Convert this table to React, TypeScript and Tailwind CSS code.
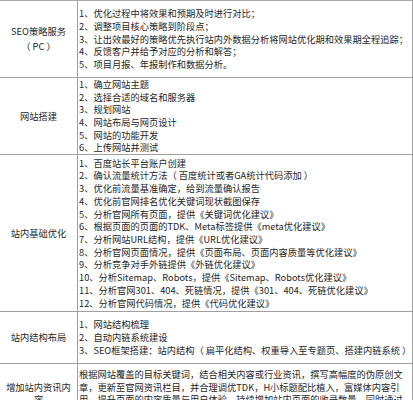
import React from "react";

const rows: { label: string; h: string; items: string[] }[] = [
  {
    label: "SEO策略服务（PC）",
    h: "h-[76px]",
    items: [
      "1、优化过程中将效果和预期及时进行对比；",
      "2、调整项目核心策略到阶段点；",
      "3、让出效最好的策略优先执行站内外数据分析将网站优化期和效果期全程追踪；",
      "4、反馈客户并给予对应的分析和解答；",
      "5、项目月报、年报制作和数据分析。",
    ],
  },
  {
    label: "网站搭建",
    h: "h-[76px]",
    items: [
      "1、确立网站主题",
      "2、选择合适的域名和服务器",
      "3、规划网站",
      "4、网站布局与网页设计",
      "5、网站的功能开发",
      "6、上传网站并测试",
    ],
  },
  {
    label: "站内基础优化",
    h: "h-[156px]",
    items: [
      "1、百度站长平台账户创建",
      "2、确认流量统计方法（ 百度统计或者GA统计代码添加 ）",
      "3、优化前流量基准确定，给到流量确认报告",
      "4、优化前官网排名优化关键词现状截图保存",
      "5、分析官网所有页面，提供《关键词优化建议》",
      "6、根据页面的页面的TDK、Meta标签提供《meta优化建议》",
      "7、分析网站URL结构，提供《URL优化建议》",
      "8、分析官网页面情况，提供《页面布局、页面内容质量等优化建议》",
      "9、分析竞争对手外链提供《外链优化建议》",
      "10、分析Sitemap、Robots，提供《Sitemap、Robots优化建议》",
      "11、分析官网301、404、死链情况，提供《301、404、死链优化建议》",
      "12、分析官网代码情况，提供《代码优化建议》",
    ],
  },
  {
    label: "站内结构布局",
    h: "h-[51px]",
    items: [
      "1、网站结构梳理",
      "2、自动内链系统建设",
      "3、SEO框架搭建：站内结构（ 扁平化结构、权重导入至专题页、搭建内链系统 ）",
    ],
  },
];

export default function App() {
  return (
    <div
      className="w-[413px] h-[400px] overflow-hidden bg-white text-[#262626] text-[9.25px] leading-[12.7px]"
      style={{ fontFamily: '"Noto Sans CJK SC", "Noto Sans", sans-serif' }}
    >
      <div className="grid grid-cols-[78px_335px] border-t border-[#a8a8a8]">
        {rows.map((r) => (
          <React.Fragment key={r.label}>
            <div
              className={`${r.h} box-content flex items-center justify-center text-center px-[3px] border-r border-b border-[#a0a0a0] w-[71px]`}
            >
              {r.label === "SEO策略服务（PC）" ? (
                <div>
                  <div>SEO策略服务</div>
                  <div className="mt-[2px]">（ PC ）</div>
                </div>
              ) : (
                <div>{r.label}</div>
              )}
            </div>
            <div
              className={`${r.h} box-content flex flex-col justify-center pl-[1px] pr-[1px] border-r border-b border-[#a0a0a0]`}
            >
              {r.items.map((t) => (
                <div key={t} className="whitespace-nowrap">
                  {t}
                </div>
              ))}
            </div>
          </React.Fragment>
        ))}
        <div className="box-content flex items-center justify-center text-center px-[3px] border-r border-b border-[#a0a0a0] w-[71px]">
          <div>增加站内资讯内容</div>
        </div>
        <div className="py-[4px] pl-[1px] pr-[1px] border-r border-b border-[#a0a0a0]">
          根据网站覆盖的目标关键词，结合相关内容或行业资讯，撰写高幅度的伪原创文章，更新至官网资讯栏目，并合理调优TDK，H小标题配比植入，富媒体内容引用，提升页面的内容质量与用户体验，持续增加站内页面的收录数量，同时通过内链将权重传递至核心页面，带动目标关键词排名的整体提升。
        </div>
      </div>
    </div>
  );
}
